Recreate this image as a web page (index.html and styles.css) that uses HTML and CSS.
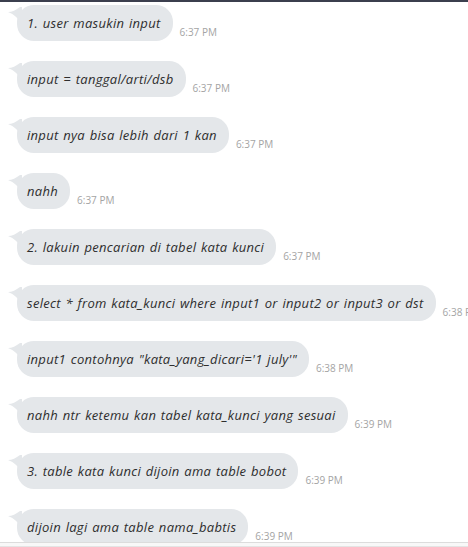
FILE: index.html
```html
<!DOCTYPE html>
<html>
<head>
<meta charset="utf-8">
<link rel="stylesheet" href="styles.css">
</head>
<body>
<div class="topbar"></div>
<div class="chat">
  <div class="msg"><div class="bubble"><svg class="tail" width="14" height="18" viewBox="0 0 14 18"><path d="M0 5 C4 5 8 3 12 0 L14 0 L14 18 C11 12 6 7 0 5 Z"/></svg>1. user masukin input</div><span class="time">6:37 PM</span></div>
  <div class="msg"><div class="bubble"><svg class="tail" width="14" height="18" viewBox="0 0 14 18"><path d="M0 5 C4 5 8 3 12 0 L14 0 L14 18 C11 12 6 7 0 5 Z"/></svg>input = tanggal/arti/dsb</div><span class="time">6:37 PM</span></div>
  <div class="msg"><div class="bubble"><svg class="tail" width="14" height="18" viewBox="0 0 14 18"><path d="M0 5 C4 5 8 3 12 0 L14 0 L14 18 C11 12 6 7 0 5 Z"/></svg>input nya bisa lebih dari 1 kan</div><span class="time">6:37 PM</span></div>
  <div class="msg"><div class="bubble"><svg class="tail" width="14" height="18" viewBox="0 0 14 18"><path d="M0 5 C4 5 8 3 12 0 L14 0 L14 18 C11 12 6 7 0 5 Z"/></svg>nahh</div><span class="time">6:37 PM</span></div>
  <div class="msg"><div class="bubble"><svg class="tail" width="14" height="18" viewBox="0 0 14 18"><path d="M0 5 C4 5 8 3 12 0 L14 0 L14 18 C11 12 6 7 0 5 Z"/></svg>2. lakuin pencarian di tabel kata kunci</div><span class="time">6:37 PM</span></div>
  <div class="msg"><div class="bubble"><svg class="tail" width="14" height="18" viewBox="0 0 14 18"><path d="M0 5 C4 5 8 3 12 0 L14 0 L14 18 C11 12 6 7 0 5 Z"/></svg>select * from kata_kunci where input1 or input2 or input3 or dst</div><span class="time">6:38 PM</span></div>
  <div class="msg"><div class="bubble"><svg class="tail" width="14" height="18" viewBox="0 0 14 18"><path d="M0 5 C4 5 8 3 12 0 L14 0 L14 18 C11 12 6 7 0 5 Z"/></svg>input1 contohnya "kata_yang_dicari='1 july'"</div><span class="time">6:38 PM</span></div>
  <div class="msg"><div class="bubble"><svg class="tail" width="14" height="18" viewBox="0 0 14 18"><path d="M0 5 C4 5 8 3 12 0 L14 0 L14 18 C11 12 6 7 0 5 Z"/></svg>nahh ntr ketemu kan tabel kata_kunci yang sesuai</div><span class="time">6:39 PM</span></div>
  <div class="msg"><div class="bubble"><svg class="tail" width="14" height="18" viewBox="0 0 14 18"><path d="M0 5 C4 5 8 3 12 0 L14 0 L14 18 C11 12 6 7 0 5 Z"/></svg>3. table kata kunci dijoin ama table bobot</div><span class="time">6:39 PM</span></div>
  <div class="msg"><div class="bubble"><svg class="tail" width="14" height="18" viewBox="0 0 14 18"><path d="M0 5 C4 5 8 3 12 0 L14 0 L14 18 C11 12 6 7 0 5 Z"/></svg>dijoin lagi ama table nama_babtis</div><span class="time">6:39 PM</span></div>
</div>
<div class="footer"></div>
</body>
</html>
```

FILE: styles.css
```css
html, body {
  margin: 0;
  padding: 0;
  background: #ffffff;
  overflow: hidden;
  height: 547px;
}
body {
  position: relative;
}
.topbar {
  height: 2px;
  background: #3b3f4e;
}
.chat {
  display: flex;
  flex-direction: column;
  gap: 20px;
  padding: 3px 0 0 17px;
}
.msg {
  display: flex;
  align-items: flex-end;
  gap: 7px;
  white-space: nowrap;
  flex: none;
}
.bubble {
  position: relative;
  height: 36px;
  box-sizing: border-box;
  padding: 0 12px 0 10px;
  background: #e4e7ea;
  border-radius: 17px;
  display: flex;
  align-items: center;
  font-family: "Open Sans", sans-serif;
  font-style: italic;
  font-size: 13px;
  color: #2e2e2e;
  letter-spacing: 0.3px;
  word-spacing: 1px;
}
.tail {
  position: absolute;
  left: -9px;
  top: 2px;
  fill: #e4e7ea;
}
.time {
  font-family: "Open Sans", sans-serif;
  font-size: 10px;
  color: #a4a4a4;
  margin-bottom: 2px;
}
.footer {
  position: absolute;
  left: 0;
  right: 0;
  bottom: 0;
  height: 3px;
  border-top: 1px solid #dcdcdc;
  border-bottom: 1px solid #e4e4e4;
  background: #f8f8f8;
}
```
